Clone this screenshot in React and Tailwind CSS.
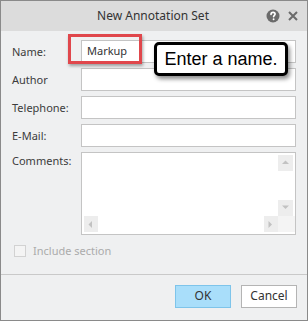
const FIELDS = [
  { label: "Name:", value: "Markup" },
  { label: "Author", value: "" },
  { label: "Telephone:", value: "" },
  { label: "E-Mail:", value: "" },
];

function HelpIcon() {
  return (
    <svg width="14" height="14" viewBox="0 0 14 14">
      <circle cx="7" cy="7" r="6.5" fill="#6b6b6b" />
      <path
        d="M5 5.4 C5 4.1 6 3.4 7.1 3.4 C8.3 3.4 9.1 4.1 9.1 5.1 C9.1 6.3 7.6 6.5 7.6 7.8"
        fill="none"
        stroke="#fff"
        strokeWidth="1.6"
        strokeLinecap="round"
      />
      <circle cx="7.6" cy="10.2" r="0.95" fill="#fff" />
    </svg>
  );
}

function CloseIcon() {
  return (
    <svg width="10" height="10" viewBox="0 0 10 10">
      <path d="M1 1 L9 9 M9 1 L1 9" stroke="#6b6b6b" strokeWidth="2" />
    </svg>
  );
}

function Arrow({ dir }) {
  const paths = {
    up: "M1 5 L4.5 1.5 L8 5 Z",
    down: "M1 1.5 L8 1.5 L4.5 5 Z",
    left: "M5 1 L1.5 4.5 L5 8 Z",
    right: "M1.5 1 L5 4.5 L1.5 8 Z",
  };
  return (
    <svg width="9" height="9" viewBox="0 0 9 9">
      <path d={paths[dir]} fill="#c2c2c2" />
    </svg>
  );
}

export default function App() {
  return (
    <div
      className="relative flex h-[321px] w-[308px] flex-col overflow-hidden border border-[#8a8a8a] bg-[#eff0f1] text-[11px] text-[#3c3c3c]"
      style={{ fontFamily: '"Noto Sans", "Open Sans", sans-serif' }}
    >
      <div className="relative flex h-[30px] shrink-0 items-center justify-center bg-[#dcdcdc] text-[12px] text-[#333]">
        <span className="ml-[-2px]">New Annotation Set</span>
        <div className="absolute right-[9px] top-[8px] flex items-center gap-[8px]">
          <HelpIcon />
          <CloseIcon />
        </div>
      </div>

      <div className="flex flex-col gap-[5px] pl-[11px] pr-[11px] pt-[9px]">
        {FIELDS.map((field) => (
          <div key={field.label} className="flex h-[23px] items-center">
            <div className="w-[69px] leading-none">{field.label}</div>
            <div className="flex h-[23px] flex-1 items-center border border-[#c4c4c4] bg-white px-[5px] text-[#333]">
              {field.value}
            </div>
          </div>
        ))}

        <div className="flex h-[83px]">
          <div className="w-[69px] pt-[1px]">Comments:</div>
          <div className="flex flex-1 flex-col border border-[#c4c4c4] bg-white">
            <div className="flex flex-1">
              <div className="flex-1" />
              <div className="mr-[2px] mt-[2px] flex w-[15px] flex-col">
                <div className="flex h-[16px] items-center justify-center bg-[#ededed]">
                  <Arrow dir="up" />
                </div>
                <div className="flex-1" />
                <div className="flex h-[16px] items-center justify-center bg-[#ededed]">
                  <Arrow dir="down" />
                </div>
              </div>
            </div>
            <div className="mb-[2px] ml-[2px] flex h-[16px]">
              <div className="flex w-[14px] items-center justify-center bg-[#ededed]">
                <Arrow dir="left" />
              </div>
              <div className="flex-1" />
              <div className="flex w-[14px] items-center justify-center bg-[#ededed]">
                <Arrow dir="right" />
              </div>
              <div className="w-[17px] bg-[#f4f4f4]" />
            </div>
          </div>
        </div>

        <div className="mt-[3px] flex items-center gap-[7px] pl-[2px]">
          <div className="h-[12px] w-[12px] border border-[#d2d2d2] bg-[#f4f4f4]" />
          <span className="text-[#ababab]">Include section</span>
        </div>
      </div>

      <div className="mt-[14px] border-t border-[#c9c9c9]" />

      <div className="flex justify-end gap-[10px] pr-[10px] pt-[10px]">
        <button className="h-[23px] w-[56px] border border-[#7ec4ea] bg-[#a9defa] text-[12px] text-[#333]">
          OK
        </button>
        <button className="h-[23px] w-[56px] border border-[#b4b4b4] bg-white text-[12px] text-[#333]">
          Cancel
        </button>
      </div>

      <div className="absolute left-[67px] top-[33px] h-[30px] w-[74px] border-[3px] border-[#e0474c] shadow-[1px_2px_3px_rgba(0,0,0,0.35)]" />

      <div
        className="absolute left-[153px] top-[41px] flex h-[34px] w-[134px] items-center justify-center rounded-[5px] border-[3px] border-black bg-white text-[18px] text-black shadow-[2px_3px_4px_rgba(0,0,0,0.45)]"
        style={{ fontFamily: '"Liberation Sans", Arial, sans-serif' }}
      >
        Enter a name.
      </div>
    </div>
  );
}
